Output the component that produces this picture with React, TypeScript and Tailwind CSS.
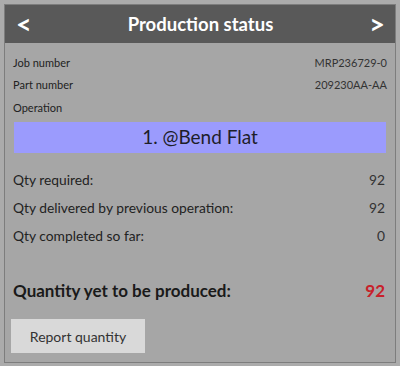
import React from "react";

export default function App() {
  const font = { fontFamily: "Lato, 'Open Sans', sans-serif" };
  return (
    <div className="w-[400px] h-[366px] bg-[#ababab] pt-[4px] pl-[4px]" style={font}>
      <div className="w-[392px] h-[359px] bg-[#a6a6a6] border border-[#7d7d7d] flex flex-col">
        <div className="h-[38px] bg-[#595959] flex items-center justify-between pl-[11px] pr-[10px] text-white font-bold">
          <span className="text-[27px] leading-none -mt-[2px]">&lt;</span>
          <span className="text-[18.5px] leading-none">Production status</span>
          <span className="text-[27px] leading-none -mt-[2px]">&gt;</span>
        </div>
        <div className="flex flex-col px-[8px] pt-[9px] text-[#222] text-[11px]">
          <div className="h-[22px] flex items-center justify-between">
            <span>Job number</span>
            <span className="text-[#333]">MRP236729-0</span>
          </div>
          <div className="h-[22px] flex items-center justify-between">
            <span>Part number</span>
            <span className="text-[#333]">209230AA-AA</span>
          </div>
          <div className="h-[24px] flex items-center">
            <span>Operation</span>
          </div>
          <div className="mt-[2px] mx-[1px] h-[31px] bg-[#9b9bfd] flex items-center justify-center text-[19px] text-[#1e1e2a]">
            1. @Bend Flat
          </div>
          <div className="mt-[14px] flex flex-col text-[13.8px]">
            <div className="h-[27px] flex items-center justify-between pr-[2px]">
              <span>Qty required:</span>
              <span className="text-[#333]">92</span>
            </div>
            <div className="h-[28px] flex items-center justify-between pr-[2px]">
              <span>Qty delivered by previous operation:</span>
              <span className="text-[#333]">92</span>
            </div>
            <div className="h-[28px] flex items-center justify-between pr-[2px]">
              <span>Qty completed so far:</span>
              <span className="text-[#333]">0</span>
            </div>
          </div>
          <div className="mt-[29px] h-[24px] flex items-center justify-between pr-[2px] font-bold text-[17px] text-[#1a1a1a]">
            <span>Quantity yet to be produced:</span>
            <span className="text-[#c8202a]">92</span>
          </div>
          <div className="mt-[16px]">
            <button className="w-[134px] h-[34px] -ml-[2px] bg-[#d9d9d9] text-[14px] text-[#333] flex items-center justify-center">
              Report quantity
            </button>
          </div>
        </div>
      </div>
    </div>
  );
}
